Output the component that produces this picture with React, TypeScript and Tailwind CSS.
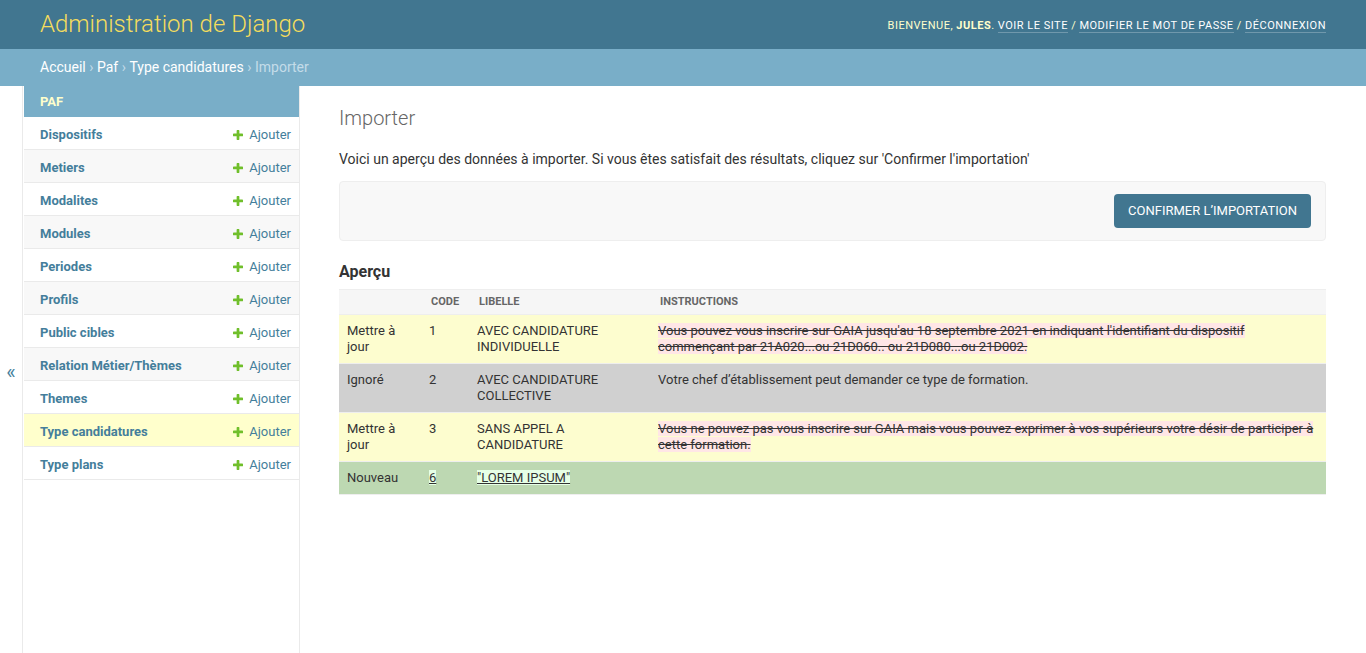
import { Fragment } from 'react'

const models = [
  'Dispositifs',
  'Metiers',
  'Modalites',
  'Modules',
  'Periodes',
  'Profils',
  'Public cibles',
  'Relation Métier/Thèmes',
  'Themes',
  'Type candidatures',
  'Type plans'
]

function AddIcon() {
  return (
    <svg width="10" height="10" viewBox="192 192 1408 1408" className="shrink-0">
      <path
        fill="#70bf2b"
        d="M1600 796v192q0 40-28 68t-68 28h-416v416q0 40-28 68t-68 28h-192q-40 0-68-28t-28-68v-416h-416q-40 0-68-28t-28-68v-192q0-40 28-68t68-28h416v-416q0-40 28-68t68-28h192q40 0 68 28t28 68v416h416q40 0 68 28t28 68z"
      />
    </svg>
  )
}

function Del({ children }: { children: React.ReactNode }) {
  return <del className="bg-[#ffe6e6] line-through">{children}</del>
}

function Ins({ children }: { children: React.ReactNode }) {
  return <ins className="bg-[#e6ffe6] underline">{children}</ins>
}

const rows = [
  {
    bg: 'bg-[#fdfdcf]',
    action: 'Mettre à jour',
    code: '1',
    libelle: 'AVEC CANDIDATURE INDIVIDUELLE',
    instructions: (
      <Del>
        Vous pouvez vous inscrire sur GAIA jusqu'au 18 septembre 2021 en indiquant l'identifiant du dispositif
        commençant par 21A020...ou 21D060.. ou 21D080...ou 21D002.
      </Del>
    )
  },
  {
    bg: 'bg-[#d0d0d0]',
    action: 'Ignoré',
    code: '2',
    libelle: 'AVEC CANDIDATURE COLLECTIVE',
    instructions: 'Votre chef d’établissement peut demander ce type de formation.'
  },
  {
    bg: 'bg-[#fdfdcf]',
    action: 'Mettre à jour',
    code: '3',
    libelle: 'SANS APPEL A CANDIDATURE',
    instructions: (
      <Del>
        Vous ne pouvez pas vous inscrire sur GAIA mais vous pouvez exprimer à vos supérieurs votre désir de
        participer à cette formation.
      </Del>
    )
  },
  {
    bg: 'bg-[#bdd8b2]',
    action: 'Nouveau',
    code: <Ins>6</Ins>,
    libelle: <Ins>"LOREM IPSUM"</Ins>,
    instructions: ''
  }
]

export default function App() {
  return (
    <div className="min-h-screen flex flex-col bg-white font-[Roboto,sans-serif] text-[14px] text-[#333]">
      <header className="h-[49px] shrink-0 bg-[#417690] px-10 flex items-center justify-between">
        <div className="text-[24px] leading-[29px] font-light text-[#f5dd5d]">Administration de Django</div>
        <div className="text-[11px] tracking-[0.5px] uppercase text-[#ffc] pt-[4px]">
          Bienvenue, <strong className="font-bold">Jules</strong>.{' '}
          <a className="text-white border-b border-white/25">Voir le site</a> /{' '}
          <a className="text-white border-b border-white/25">Modifier le mot de passe</a> /{' '}
          <a className="text-white border-b border-white/25">Déconnexion</a>
        </div>
      </header>

      <div className="h-[37px] shrink-0 bg-[#79aec8] px-10 flex items-center text-[14px] text-[#c4dce8]">
        <a className="text-white">Accueil</a>
        <span className="mx-[3.5px]">›</span>
        <a className="text-white">Paf</a>
        <span className="mx-[3.5px]">›</span>
        <a className="text-white">Type candidatures</a>
        <span className="mx-[3.5px]">›</span>
        <span>Importer</span>
      </div>

      <div className="flex flex-1">
        <button className="w-[23px] shrink-0 border-r border-[#eaeaea] flex items-center justify-center text-[20px] text-[#447e9b] pt-[5px]">
          «
        </button>

        <aside className="w-[277px] shrink-0 border-r border-[#eaeaea] pl-px">
          <div className="h-[31px] bg-[#79aec8] pl-4 pt-px flex items-center text-[13px] font-bold uppercase text-[#ffc]">
            Paf
          </div>
          {models.map((name, i) => (
            <div
              key={name}
              className={
                'h-[33px] border-b border-[#eaeaea] pl-4 pr-2 pt-[3px] flex items-center justify-between text-[13px] ' +
                (name === 'Type candidatures' ? 'bg-[#ffc]' : i % 2 === 1 ? 'bg-[#f8f8f8]' : 'bg-white')
              }
            >
              <a className="font-bold text-[#447e9b]">{name}</a>
              <a className="flex items-center gap-[6px] text-[#447e9b]">
                <AddIcon />
                Ajouter
              </a>
            </div>
          ))}
        </aside>

        <main className="flex-1 pl-[39px] pr-10 pt-5">
          <h1 className="text-[20px] leading-[24px] font-light text-[#666]">Importer</h1>
          <p className="mt-[21px] leading-[17px]">
            Voici un aperçu des données à importer. Si vous êtes satisfait des résultats, cliquez sur 'Confirmer
            l'importation'
          </p>

          <div className="mt-[13px] bg-[#f8f8f8] border border-[#eee] rounded px-[14px] py-3 flex justify-end">
            <button className="h-[34px] px-[14px] rounded bg-[#417690] text-white text-[13px] uppercase">
              Confirmer l’importation
            </button>
          </div>

          <h2 className="mt-[21px] mb-[8px] text-[16px] leading-[19px] font-bold text-[#333]">Aperçu</h2>

          <table className="w-full table-fixed border-collapse text-[13px]">
            <colgroup>
              <col className="w-[82px]" />
              <col className="w-[48px]" />
              <col className="w-[181px]" />
              <col />
            </colgroup>
            <thead>
              <tr className="bg-[#f6f6f6]">
                {['', 'Code', 'Libelle', 'Instructions'].map(h => (
                  <th
                    key={h}
                    className="px-[10px] py-[5px] text-left text-[11px] leading-[14px] font-bold uppercase text-[#666] border-y border-[#eee]"
                  >
                    {h}
                  </th>
                ))}
              </tr>
            </thead>
            <tbody>
              {rows.map((r, i) => (
                <Fragment key={i}>
                  <tr className={r.bg}>
                    <td className="p-2 leading-4 align-top border-b border-[#eee]">{r.action}</td>
                    <td className="p-2 leading-4 align-top border-b border-[#eee]">{r.code}</td>
                    <td className="p-2 leading-4 align-top border-b border-[#eee]">{r.libelle}</td>
                    <td className="p-2 leading-4 align-top border-b border-[#eee]">{r.instructions}</td>
                  </tr>
                </Fragment>
              ))}
            </tbody>
          </table>
        </main>
      </div>
    </div>
  )
}
